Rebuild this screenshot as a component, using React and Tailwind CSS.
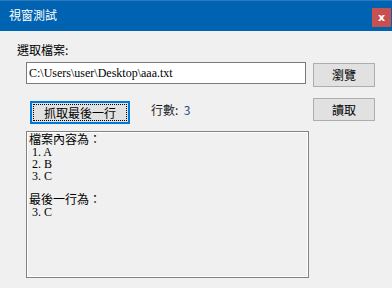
import React from "react";

const ui = { fontFamily: '"Noto Sans CJK TC", "Noto Sans", sans-serif' };
const ming = { fontFamily: '"Liberation Serif", "Noto Sans CJK TC", serif' };

const WinButton = ({ children, className = "" }) => (
  <button
    className={`flex items-center justify-center bg-[#e1e1e1] border border-[#adadad] text-[12px] leading-[14px] text-black ${className}`}
    style={ui}
  >
    {children}
  </button>
);

export default function App() {
  const lines = ["檔案內容為：", "1. A", "2. B", "3. C", "", "最後一行為：", "3. C"];

  return (
    <div className="w-[392px] h-[288px] bg-[#f0f0f0] flex flex-col overflow-hidden" style={ui}>
      {/* title bar */}
      <div className="h-[31px] bg-[#0063b1] border-t border-[#2a78bf] flex items-start justify-between pl-[9px] pr-[1px]">
        <span className="text-white text-[12px] leading-[14px] mt-[7px]">視窗測試</span>
        <div className="w-[19px] h-[19px] mt-[7px] bg-[#c75050] flex items-center justify-center text-white text-[11px] font-bold leading-none" style={{ fontFamily: '"DejaVu Sans", sans-serif' }}>
          x
        </div>
      </div>

      <div className="flex flex-col pl-[26px]">
        <span className="-ml-[9px] mt-[12px] text-[12px] leading-[14px] text-black">選取檔案:</span>

        <div className="flex items-start mt-[5px]">
          <div
            className="w-[280px] h-[22px] bg-white border border-[#7a7a7a] pl-[2px] flex items-center text-[12px] text-black"
            style={{ fontFamily: '"Liberation Serif", serif' }}
          >
            C:\Users\user\Desktop\aaa.txt
          </div>
          <WinButton className="ml-[7px] mt-[1px] w-[62px] h-[24px]">瀏覽</WinButton>
        </div>

        <div className="flex items-start mt-[11px]">
          <div className="w-[287px] flex items-start">
            <button
              className="ml-[4px] mt-[3px] w-[100px] h-[23px] bg-[#e1e1e1] border-2 border-[#0078d7] p-[1px] text-[12px] leading-[14px] text-black"
              style={ui}
            >
              <div className="w-full h-full border border-dotted border-black flex items-center justify-center">
                抓取最後一行
              </div>
            </button>
            <span className="ml-[21px] mt-[5px] text-[12px] leading-[14px] text-[#1a1a1a]">
              行數:&nbsp;&nbsp;<span className="text-[#1b4a8a]">3</span>
            </span>
          </div>
          <WinButton className="w-[62px] h-[23px]">讀取</WinButton>
        </div>

        <div className="mt-[7px] w-[283px] h-[147px] border border-[#828282] shadow-[inset_0_0_0_1px_#ffffff] bg-[#f0f0f0] pt-[2px] pl-[2px]">
          {lines.map((l, i) => (
            <div
              key={i}
              className={`h-[12px] text-[12px] leading-[12px] text-black whitespace-pre ${/^[0-9]/.test(l) ? "pl-[3px]" : ""}`}
              style={ming}
            >
              {l}
            </div>
          ))}
        </div>
      </div>
    </div>
  );
}
